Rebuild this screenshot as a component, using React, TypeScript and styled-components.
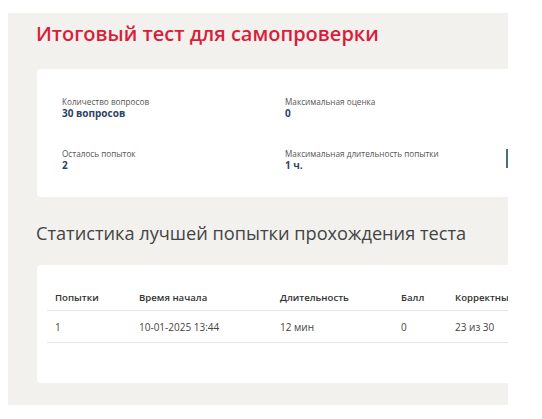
import React from "react";
import styled, { createGlobalStyle } from "styled-components";

const GlobalStyle = createGlobalStyle`
  body {
    margin: 0;
    background: #ffffff;
    font-family: "Open Sans", "Noto Sans", sans-serif;
  }
`;

const info = [
  { label: "Количество вопросов", value: "30 вопросов" },
  { label: "Максимальная оценка", value: "0" },
  { label: "Осталось попыток", value: "2" },
  { label: "Максимальная длительность попытки", value: "1 ч." },
];

const columns = [
  { title: "Попытки", width: 84 },
  { title: "Время начала", width: 141 },
  { title: "Длительность", width: 121 },
  { title: "Балл", width: 54 },
  { title: "Корректные ответы", width: 140 },
];

const rows = [["1", "10-01-2025 13:44", "12 мин", "0", "23 из 30"]];

function App() {
  return (
    <>
      <GlobalStyle />
      <Page>
        <Panel>
          <Title>Итоговый тест для самопроверки</Title>
          <Card>
            <InfoGrid>
              {info.map((item, i) => (
                <InfoItem key={i}>
                  <Label>{item.label}</Label>
                  <Value>{item.value}</Value>
                </InfoItem>
              ))}
            </InfoGrid>
            <Marker />
          </Card>
          <SubTitle>Статистика лучшей попытки прохождения теста</SubTitle>
          <TableCard>
            <Table>
              <colgroup>
                {columns.map((c) => (
                  <col key={c.title} style={{ width: c.width }} />
                ))}
              </colgroup>
              <thead>
                <tr>
                  {columns.map((c) => (
                    <Th key={c.title}>{c.title}</Th>
                  ))}
                </tr>
              </thead>
              <tbody>
                {rows.map((r, i) => (
                  <tr key={i}>
                    {r.map((cell, j) => (
                      <Td key={j}>{cell}</Td>
                    ))}
                  </tr>
                ))}
              </tbody>
            </Table>
          </TableCard>
        </Panel>
      </Page>
    </>
  );
}

const Page = styled.div`
  padding: 13px 0 0 8px;
`;

const Panel = styled.div`
  position: relative;
  width: 500px;
  height: 392px;
  background: #f2f1ee;
  overflow: hidden;
  padding: 6px 0 0 28px;
  box-sizing: border-box;
`;

const Title = styled.h1`
  margin: 0;
  font-size: 20px;
  line-height: 30px;
  font-weight: 600;
  color: #d81e3a;
`;

const Card = styled.div`
  position: relative;
  margin: 20px 0 0 1px;
  width: 520px;
  height: 128px;
  background: #fff;
  border-radius: 4px;
  box-sizing: border-box;
  padding: 27px 0 0 25px;
`;

const InfoGrid = styled.div`
  display: grid;
  grid-template-columns: 223px 223px;
  row-gap: 29px;
`;

const InfoItem = styled.div`
  display: flex;
  flex-direction: column;
`;

const Label = styled.div`
  font-size: 8.2px;
  line-height: 11px;
  color: #555;
`;

const Value = styled.div`
  font-size: 10px;
  line-height: 12px;
  font-weight: 700;
  color: #2b4464;
`;

const Marker = styled.div`
  position: absolute;
  left: 469px;
  top: 80px;
  width: 2px;
  height: 19px;
  background: #4d6c80;
`;

const SubTitle = styled.h2`
  margin: 22px 0 0 0;
  font-size: 18.2px;
  line-height: 28px;
  font-weight: 400;
  color: #444;
`;

const TableCard = styled.div`
  margin: 18px 0 0 1px;
  width: 520px;
  height: 118px;
  background: #fff;
  border-radius: 4px;
  box-sizing: border-box;
  padding: 20px 0 0 10px;
`;

const Table = styled.table`
  border-collapse: collapse;
  table-layout: fixed;
  width: 540px;
`;

const Th = styled.th`
  text-align: left;
  padding: 0 8px;
  height: 25px;
  font-size: 9.6px;
  font-weight: 600;
  color: #333;
  border-bottom: 1px solid #e6e6e6;
  white-space: nowrap;
  overflow: hidden;
`;

const Td = styled.td`
  padding: 0 8px;
  height: 31px;
  font-size: 10px;
  color: #444;
  border-bottom: 1px solid #e6e6e6;
  white-space: nowrap;
`;

export default App;
